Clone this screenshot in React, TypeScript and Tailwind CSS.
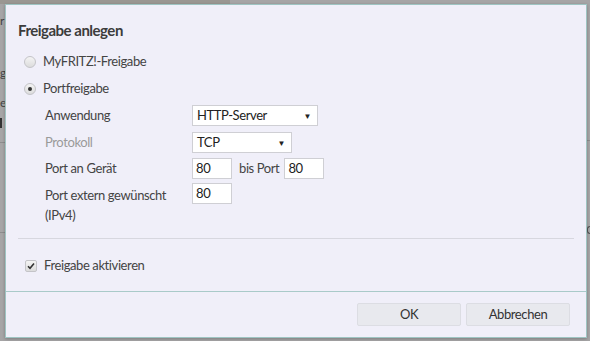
import React from "react";

const font = { fontFamily: "Lato, 'Open Sans', sans-serif" };

function Radio({ checked }: { checked?: boolean }) {
  return (
    <span className="flex h-[12px] w-[12px] items-center justify-center rounded-full border border-[#c4c4c8] bg-gradient-to-b from-[#f4f4f4] to-[#dcdcdc]">
      {checked && <span className="h-[4px] w-[4px] rounded-full bg-[#333]" />}
    </span>
  );
}

function Select({ value, width }: { value: string; width: string }) {
  return (
    <div className={`flex h-[21px] items-center justify-between border border-[#cfcfd4] bg-white pl-[4px] pr-[6px] text-[13px] text-[#222] ${width}`}>
      <span>{value}</span>
      <span className="text-[8px] leading-none text-[#222]">▼</span>
    </div>
  );
}

function Field({ value }: { value: string }) {
  return (
    <div className="flex h-[21px] w-[40px] items-center border border-[#cfcfd4] bg-white pl-[3px] text-[13px] text-[#222]">
      {value}
    </div>
  );
}

export default function App() {
  return (
    <div className="relative h-[341px] w-[590px] overflow-hidden bg-[#a6a5a6] tracking-[-0.4px]" style={font}>
      {/* page behind the overlay */}
      <div className="absolute left-0 top-0 h-[4px] w-[230px] bg-[#9a9792]" />
      <div className="absolute left-0 top-[142px] h-[1px] w-[5px] bg-[#8d8d8d]" />
      <div className="absolute left-0 top-[232px] h-[1px] w-[5px] bg-[#8d8d8d]" />
      <div className="absolute left-0 top-[12px] text-[12px] text-[#444]">r</div>
      <div className="absolute left-0 top-[64px] text-[12px] text-[#444]">g</div>
      <div className="absolute left-0 top-[94px] text-[12px] text-[#444]">e</div>
      <div className="absolute left-0 top-[118px] h-[10px] w-[2px] bg-[#333]" />
      <div className="absolute left-[586px] top-[140px] h-[1px] w-[4px] bg-[#8d8d8d]" />
      <div className="absolute left-[587px] top-[226px] h-[8px] w-[3px] rounded-l-full border border-r-0 border-[#555]" />

      {/* dialog */}
      <div className="absolute left-[5px] top-[4px] flex h-[334px] w-[582px] flex-col border border-[#9ec4c2] bg-[#f0eff9] shadow-[0_1px_3px_rgba(0,0,0,0.25)]">
        <div className="flex flex-1 flex-col px-[12px]">
          <div className="flex h-[41px] items-end pb-[5px] text-[15px] font-bold tracking-[-0.5px] text-[#3c3c3c]">
            Freigabe anlegen
          </div>

          <div className="mt-[2px] flex h-[27px] items-center gap-[7px] pl-[6px] text-[13px] text-[#444]">
            <Radio />
            <span>MyFRITZ!-Freigabe</span>
          </div>
          <div className="flex h-[27px] items-center gap-[7px] pl-[6px] text-[13px] text-[#444]">
            <Radio checked />
            <span>Portfreigabe</span>
          </div>

          <div className="flex flex-col pl-[27px] text-[13px] text-[#444]">
            <div className="flex h-[27px] items-center">
              <span className="w-[147px]">Anwendung</span>
              <Select value="HTTP-Server" width="w-[126px]" />
            </div>
            <div className="flex h-[27px] items-center">
              <span className="w-[147px] text-[#9a9a9a]">Protokoll</span>
              <Select value="TCP" width="w-[100px]" />
            </div>
            <div className="flex h-[25px] items-center">
              <span className="w-[147px]">Port an Gerät</span>
              <Field value="80" />
              <span className="ml-[7px] mr-[5px]">bis Port</span>
              <Field value="80" />
            </div>
            <div className="flex items-start pt-[2px]">
              <span className="w-[147px] pt-[2px] leading-[20px]">
                Port extern gewünscht
                <br />
                (IPv4)
              </span>
              <Field value="80" />
            </div>
          </div>

          <div className="mt-[13px] h-[1px] bg-[#d7d7df]" />

          <div className="mt-[17px] flex items-center gap-[7px] pl-[7px] text-[13px] text-[#444]">
            <span className="flex h-[12px] w-[12px] items-center justify-center rounded-[2px] border border-[#c4c4c8] bg-gradient-to-b from-[#f4f4f4] to-[#dcdcdc]">
              <svg width="8" height="8" viewBox="0 0 8 8">
                <path d="M1 4.3 L3 6.3 L7 1.5" fill="none" stroke="#333" strokeWidth="1.6" />
              </svg>
            </span>
            <span>Freigabe aktivieren</span>
          </div>
        </div>

        <div className="flex h-[46px] items-center justify-end gap-[5px] border-t border-[#a9cac9] pr-[16px]">
          <button className="h-[23px] w-[104px] rounded-[2px] border border-[#dcdde3] bg-[#e8e9ee] text-[13px] text-[#333]">
            OK
          </button>
          <button className="h-[23px] w-[104px] rounded-[2px] border border-[#dcdde3] bg-[#e8e9ee] text-[13px] text-[#333]">
            Abbrechen
          </button>
        </div>
      </div>
    </div>
  );
}
